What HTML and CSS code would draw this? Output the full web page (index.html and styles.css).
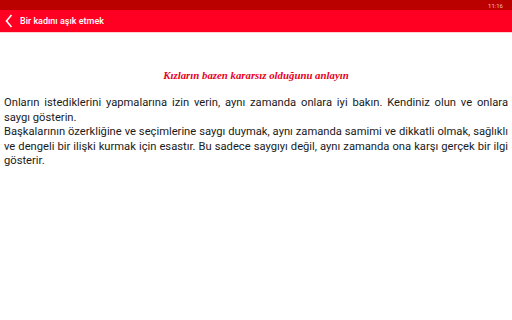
FILE: index.html
```html
<!DOCTYPE html>
<html lang="tr">
<head>
<meta charset="utf-8">
<link rel="stylesheet" href="styles.css">
</head>
<body>
<div class="status"><span class="time">11:16</span></div>
<div class="appbar">
  <svg class="back" width="8" height="14" viewBox="0 0 8 14"><path d="M6.5 1 L1.5 7 L6.5 13" fill="none" stroke="#fff" stroke-width="1.6"/></svg>
  <span class="title">Bir kadını aşık etmek</span>
</div>
<div class="content">
  <h1 class="heading">Kızların bazen kararsız olduğunu anlayın</h1>
  <p class="para">Onların istediklerini yapmalarına izin verin, aynı zamanda onlara iyi bakın. Kendiniz olun ve onlara saygı gösterin.</p>
  <p class="para">Başkalarının özerkliğine ve seçimlerine saygı duymak, aynı zamanda samimi ve dikkatli olmak, sağlıklı ve dengeli bir ilişki kurmak için esastır. Bu sadece saygıyı değil, aynı zamanda ona karşı gerçek bir ilgi gösterir.</p>
</div>
</body>
</html>
```
FILE: styles.css
```css
html, body { margin: 0; padding: 0; background: #fff; }
body { width: 512px; height: 320px; overflow: hidden; font-family: Roboto, "Noto Sans", sans-serif; }
.status { height: 10px; background: #bb0000; display: flex; justify-content: flex-end; align-items: center; padding-right: 9px; }
.time { color: #f4c0c0; font-size: 6px; font-family: Roboto, sans-serif; }
.appbar { height: 22px; background: #ff0022; display: flex; align-items: center; padding-left: 5px; gap: 7px; border-bottom: 1px solid #ffd0d4; }
.back { display: block; }
.title { color: #fff; font-size: 9px; font-weight: 500; }
.content { padding: 0 4px; }
.heading { margin: 36px 0 0; text-align: center; font-family: "Liberation Serif", serif; font-weight: bold; font-style: italic; font-size: 10.8px; color: #e8001c; line-height: 12px; }
.heading + .para { margin-top: 15px; }
.para { margin: 0; font-size: 11.2px; line-height: 14.5px; color: #1a1a1a; text-align: justify; }
```
